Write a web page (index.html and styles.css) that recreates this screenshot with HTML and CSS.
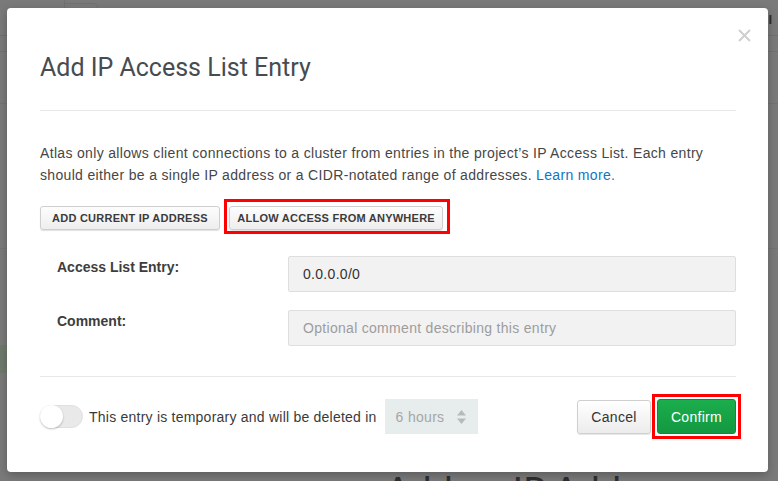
FILE: index.html
```html
<!DOCTYPE html>
<html>
<head>
<meta charset="utf-8">
<link rel="stylesheet" href="styles.css">
</head>
<body>
<div class="page">
  <div class="page-top"><div class="page-tab"></div><div class="page-tab2"></div></div>
  <div class="page-sub"></div>
  <div class="page-row"></div>
  <div class="page-row2"></div>
  <div class="page-band"></div>
  <div class="page-heading">Add an IP Address</div>
  <div class="page-mark">II</div>
</div>

<div class="modal">
  <button class="close" aria-label="Close">
    <svg width="13" height="13" viewBox="0 0 13 13"><path d="M1 1L12 12M12 1L1 12" stroke="#cfcfcf" stroke-width="2" fill="none"/></svg>
  </button>
  <div class="modal-header">
    <h2 class="title">Add IP Access List Entry</h2>
  </div>
  <div class="modal-body">
    <p class="intro">Atlas only allows client connections to a cluster from entries in the project’s IP Access List. Each entry should either be a single IP address or a CIDR-notated range of addresses. <a href="#" class="link">Learn more.</a></p>
    <div class="quick-actions">
      <button class="btn-small btn-current">Add current IP address</button>
      <button class="btn-small btn-anywhere highlight">Allow access from anywhere</button>
    </div>
    <div class="form">
      <label class="form-label">Access List Entry:</label>
      <div class="input">0.0.0.0/0</div>
      <label class="form-label">Comment:</label>
      <div class="input placeholder">Optional comment describing this entry</div>
    </div>
  </div>
  <div class="modal-footer">
    <div class="temp">
      <span class="toggle"><span class="knob"></span></span>
      <span class="temp-text">This entry is temporary and will be deleted in</span>
      <span class="select">6 hours
        <svg class="arrows" width="9" height="14" viewBox="0 0 9 14"><path d="M4.5 0L9 5.5H0Z M4.5 14L9 8.5H0Z" fill="#b4bcbb"/></svg>
      </span>
    </div>
    <div class="actions">
      <button class="btn cancel">Cancel</button>
      <button class="btn confirm highlight-lg">Confirm</button>
    </div>
  </div>
</div>
</body>
</html>
```

FILE: styles.css
```css
* { box-sizing: border-box; }
html, body { margin: 0; padding: 0; }
body {
  width: 778px;
  height: 481px;
  overflow: hidden;
  background: #7a7a7a;
  font-family: "Liberation Sans", Arial, sans-serif;
  position: relative;
}

/* dimmed page behind the overlay */
.page { width: 778px; height: 481px; overflow: hidden; }
.page-top {
  height: 36px;
  border-bottom: 1px solid #707070;
  display: flex;
}
.page-tab {
  width: 65px;
  border-right: 1px solid #717171;
}
.page-tab2 {
  width: 33px;
  margin-top: 3px;
  border-right: 1px solid #717171;
  border-top: 1px solid #717171;
  border-top-right-radius: 5px;
}
.page-sub { height: 16px; border-bottom: 1px solid #727272; }
.page-row { height: 52px; border-bottom: 1px solid #737373; }
.page-row2 { height: 145px; border-bottom: 1px solid #747474; }
.page-band { margin-top: 96px; width: 60px; height: 28px; background: #6f7a6d; }
.page-heading {
  margin-top: 97px;
  padding-left: 385px;
  font-family: Lato, "Liberation Sans", sans-serif;
  font-size: 38px;
  line-height: 40px;
  color: #2f2f2f;
  white-space: nowrap;
}
.page-mark {
  position: absolute;
  top: 12px;
  right: 6px;
  font-size: 13px;
  font-weight: bold;
  color: #2d2d2d;
}

/* modal */
.modal {
  position: absolute;
  left: 7px;
  top: 8px;
  width: 761px;
  height: 464px;
  background: #fff;
  border-radius: 4px;
  box-shadow: 0 3px 10px rgba(0,0,0,0.25);
  padding: 0 32px 0 33px;
}
.close {
  position: absolute;
  top: 21px;
  right: 17px;
  border: 0;
  background: none;
  padding: 0;
  width: 13px;
  height: 13px;
  display: block;
}
.close svg { display: block; }

.modal-header {
  padding: 45px 0 27px;
  border-bottom: 1px solid #e8e8e8;
}
.title {
  margin: 0;
  font-family: Roboto, "Liberation Sans", sans-serif;
  font-weight: 400;
  font-size: 25px;
  line-height: 30px;
  color: #464c50;
}

.modal-body { padding-top: 31px; }
.intro {
  margin: 0;
  font-size: 14px;
  line-height: 22px;
  letter-spacing: 0.33px;
  color: #464646;
}
.link { color: #0f76c3; text-decoration: none; }

.quick-actions {
  margin-top: 20px;
  display: flex;
  gap: 9px;
}
.btn-small {
  position: relative;
  height: 24px;
  padding: 0 8px;
  font-family: "Liberation Sans", Arial, sans-serif;
  font-size: 11px;
  font-weight: bold;
  text-transform: uppercase;
  letter-spacing: 0.25px;
  color: #3b3b3b;
  background: linear-gradient(#fdfdfd, #eeeeee);
  border: 1px solid #cfcfcf;
  border-radius: 3px;
  box-shadow: 0 1px 1px rgba(0,0,0,0.12);
}
.btn-current { padding: 0 11px; }
.btn-anywhere { padding: 0 7.5px; }
.highlight::after {
  content: "";
  position: absolute;
  left: -6px;
  right: -8px;
  top: -8px;
  bottom: -5px;
  border: 3px solid #ff0000;
}

.form {
  margin-top: 26px;
  display: grid;
  grid-template-columns: 248px 1fr;
  row-gap: 18px;
}
.form-label {
  padding: 1px 0 0 17px;
  font-size: 14px;
  line-height: 20px;
  font-weight: bold;
  color: #3d3d3d;
}
.input {
  height: 36px;
  background: #f2f2f2;
  border: 1px solid #dedede;
  border-radius: 2px;
  padding: 0 14px;
  display: flex;
  align-items: center;
  font-size: 14px;
  letter-spacing: 0.3px;
  color: #333;
}
.input.placeholder { color: #9d9d9d; }

.modal-footer {
  margin-top: 30px;
  border-top: 1px solid #e8e8e8;
  padding-top: 22px;
  display: flex;
  align-items: center;
}
.temp {
  display: flex;
  align-items: center;
}
.toggle {
  width: 43px;
  height: 23px;
  border-radius: 12px;
  background: #e9e9e9;
  border: 1px solid #e0e0e0;
  position: relative;
  display: block;
}
.knob {
  display: block;
  width: 23px;
  height: 23px;
  margin: -1px 0 0 -1px;
  border-radius: 50%;
  background: #fff;
  box-shadow: 0 1px 2px rgba(0,0,0,0.25);
}
.temp-text {
  margin-left: 6px;
  font-size: 14px;
  letter-spacing: 0.23px;
  color: #3a3a3a;
}
.select {
  margin-left: 8px;
  width: 93px;
  height: 35px;
  background: #e6edec;
  display: flex;
  align-items: center;
  justify-content: space-between;
  padding: 0 12px 0 11px;
  font-size: 14px;
  letter-spacing: 0.3px;
  color: #a6a6a6;
}
.arrows { display: block; }

.actions {
  margin-left: auto;
  display: flex;
  gap: 6px;
  align-items: center;
}
.btn {
  position: relative;
  height: 35px;
  font-family: "Liberation Sans", Arial, sans-serif;
  font-size: 14px;
  letter-spacing: 0.3px;
  border-radius: 3px;
}
.cancel {
  width: 74px;
  height: 34px;
  color: #333;
  background: linear-gradient(#ffffff, #ececec);
  border: 1px solid #cfcfcf;
  box-shadow: 0 1px 1px rgba(0,0,0,0.1);
}
.confirm {
  width: 79px;
  color: #fff;
  background: linear-gradient(#1bae4c, #139842);
  border: 1px solid #0f8a3a;
}
.highlight-lg::after {
  content: "";
  position: absolute;
  left: -6px;
  right: -6px;
  top: -6px;
  bottom: -6px;
  border: 3px solid #ff0000;
}
```
